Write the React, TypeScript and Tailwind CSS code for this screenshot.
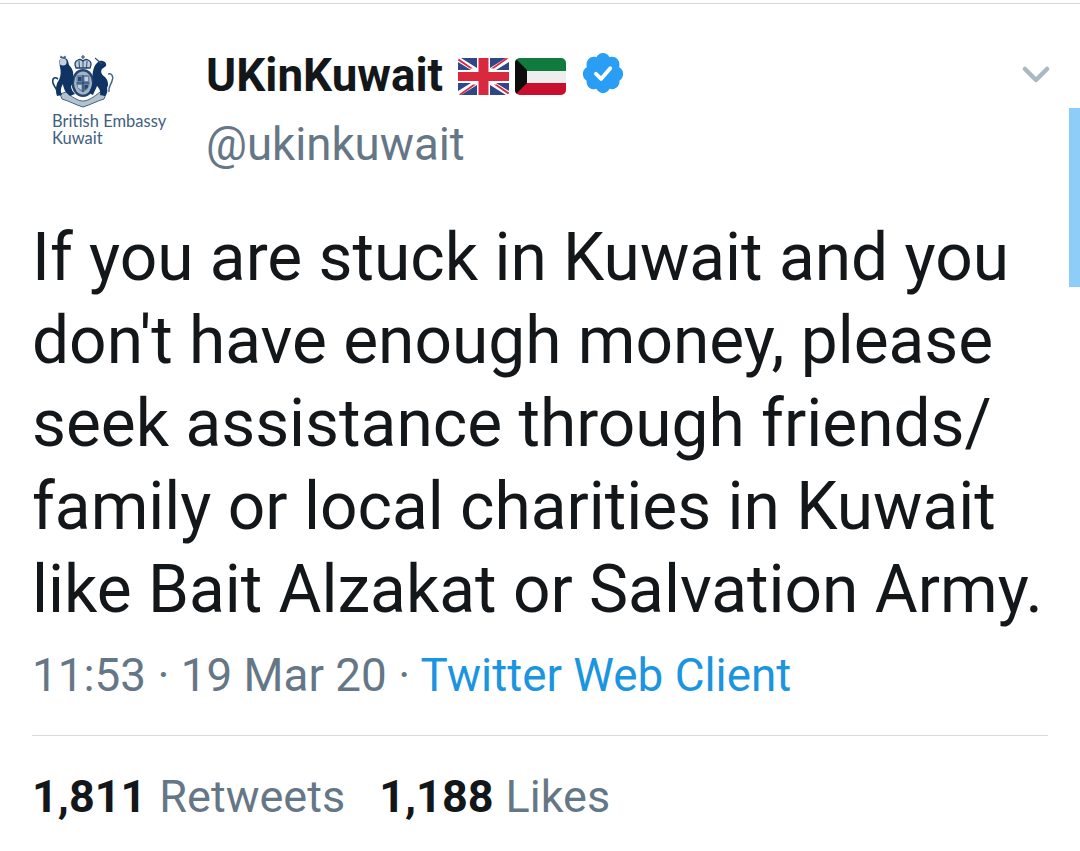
const font = { fontFamily: "Roboto, sans-serif" };

function Crest() {
  return (
    <svg width="64" height="54" viewBox="0 0 64 54" className="block">
      {/* motto ribbon */}
      <path d="M8 39 L14 37 C20 42 26 46 31 46 C36 46 42 42 48 37 L54 39 L52 44 C45 46 38 50 31 52 C24 50 17 46 10 44 Z" fill="#b4c1cf" stroke="#31527a" strokeWidth="0.9" />
      {/* crown */}
      <path d="M31 0 V4 M29 2 H33" stroke="#31527a" strokeWidth="1.2" />
      <path d="M24 13 C22 9 23 6 26 5 C28 4 30 5 31 6 C32 5 34 4 36 5 C39 6 40 9 38 13 Z" fill="#c2cdd9" stroke="#1c3f6b" strokeWidth="1.3" />
      <path d="M31 5 V13 M27 6 L27.5 13 M35 6 L34.5 13" stroke="#1c3f6b" strokeWidth="0.9" />
      {/* garter and shield */}
      <ellipse cx="31" cy="28" rx="11.5" ry="14" fill="#23466f" />
      <ellipse cx="31" cy="28" rx="9" ry="11.5" fill="#a4b4c6" />
      <path d="M24.5 20 H37.5 V29 C37.5 33 34 36 31 37.5 C28 36 24.5 33 24.5 29 Z" fill="#6c86a3" />
      <path d="M31 20 V37 M24.5 28 H37.5" stroke="#1f4470" strokeWidth="1.1" />
      <path d="M26 22 H29.5 V26 H26 Z M32.5 30 H36 V32.5 L32.5 35 Z" fill="#25496f" />
      <path d="M32.5 22 H36 V26 H32.5 Z M26 30 H29.5 V35 L26 32.5 Z" fill="#c6d0db" />
      {/* lion */}
      <path d="M7 6 C9 2 15 2 16 6 L17 10 C20 13 22 17 21 21 C22 24 21 29 19 31 C19 34 21 37 23 39 L18 41 L13 36 C12 33 11 31 11 29 C9 32 8 36 10 40 L5 41 C3 35 4 29 7 25 C9 21 9 16 8 12 Z" fill="#0f3463" />
      <ellipse cx="11" cy="7" rx="3.6" ry="3.6" fill="#c5d0dc" />
      <path d="M8 3 L8.5 0.5 L11 2 L13.5 0.5 L14 3 Z" fill="#456484" />
      <path d="M6 24 C2 21 0 24 1 28 C2 32 5 33 5 37" fill="none" stroke="#143a69" strokeWidth="1.6" />
      {/* unicorn */}
      <path d="M47 6 C52 5 55 8 54 11 L50 14 C48 17 50 20 53 22 C56 25 57 30 55 33 C56 36 55 39 53 41 L48 40 C49 36 47 33 45 31 C44 34 42 37 41 40 L37 38 C39 34 41 29 41 24 C40 19 41 13 44 9 Z" fill="#0f3463" />
      <path d="M43 3 L50 9" stroke="#31527a" strokeWidth="1.2" />
      <path d="M56 19 C60 18 62 22 60 26 C59 30 56 32 57 37" fill="none" stroke="#47658a" strokeWidth="1.5" />
    </svg>
  );
}

function UkFlag() {
  return (
    <svg width="51" height="37" viewBox="0 0 51 37" className="block">
      <defs>
        <clipPath id="ukc"><rect width="51" height="37" rx="3" /></clipPath>
      </defs>
      <g clipPath="url(#ukc)">
        <rect width="51" height="37" fill="#fff" />
        <path d="M3 0 L19 0 L19 10 Z M32 0 L48 0 L32 10 Z M0 4 L13 12 L0 12 Z M51 4 L38 12 L51 12 Z M0 25 L13 25 L0 33 Z M51 25 L38 25 L51 33 Z M19 27 L19 37 L3 37 Z M32 27 L48 37 L32 37 Z" fill="#2f4687" />
        <path d="M0 0 L15 10.5 L12 10.5 L0 2.5 Z M51 0 L36 10.5 L33 10.5 L48 0 Z M0 37 L15 26.5 L18 26.5 L3 37 Z M51 37 L36 26.5 L39 26.5 L51 34.5 Z" fill="#d8293f" />
        <rect x="20.5" width="10" height="37" fill="#d8293f" />
        <rect y="14" width="51" height="9" fill="#d8293f" />
      </g>
    </svg>
  );
}

function KwFlag() {
  return (
    <svg width="51" height="37" viewBox="0 0 51 37" className="block">
      <defs>
        <clipPath id="kwc"><rect width="51" height="37" rx="5" /></clipPath>
      </defs>
      <g clipPath="url(#kwc)">
        <rect width="51" height="13" fill="#117a3e" />
        <rect y="13" width="51" height="12" fill="#eeeeee" />
        <rect y="25" width="51" height="12" fill="#c8102e" />
        <path d="M0 0 L12 12 V25 L0 37 Z" fill="#0c0c0c" />
      </g>
    </svg>
  );
}

function Verified() {
  return (
    <svg width="46" height="46" viewBox="0 0 24 24" className="block">
      <path
        fill="#2a9df4"
        d="M22.5 12.5c0-1.58-.875-2.95-2.148-3.6.154-.435.238-.905.238-1.4 0-2.21-1.71-3.998-3.818-3.998-.47 0-.92.084-1.336.25C14.818 2.415 13.51 1.5 12 1.5s-2.816.917-3.437 2.25c-.415-.165-.866-.25-1.336-.25-2.11 0-3.818 1.79-3.818 4 0 .494.083.964.237 1.4-1.272.65-2.147 2.018-2.147 3.6 0 1.495.782 2.798 1.942 3.486-.02.17-.032.34-.032.514 0 2.21 1.708 4 3.818 4 .47 0 .92-.086 1.335-.25.62 1.334 1.926 2.25 3.437 2.25 1.512 0 2.818-.916 3.437-2.25.415.163.865.248 1.336.248 2.11 0 3.818-1.79 3.818-4 0-.174-.012-.344-.033-.513 1.158-.687 1.943-1.99 1.943-3.484z"
      />
      <path fill="none" stroke="#fff" strokeWidth="2" strokeLinecap="round" strokeLinejoin="round" d="M8.3 12.4l2.7 2.7 4.8-5.6" />
    </svg>
  );
}

export default function App() {
  return (
    <div className="relative w-[1080px] h-[851px] bg-white overflow-hidden" style={font}>
      <div className="h-[4px] border-t border-[#d9d9d9] mt-[3px]" />

      <div className="flex pl-[32px] pt-[39px]">
        <div className="w-[140px] h-[130px] flex flex-col pt-[9px] pl-[20px] shrink-0">
          <Crest />
          <div className="mt-[4px] text-[16.5px] leading-[17px] text-[#3f5f80] font-['Lato',sans-serif] whitespace-nowrap">
            <p>British Embassy</p>
            <p>Kuwait</p>
          </div>
        </div>
        <div className="pl-[34px]">
          <div className="flex items-center h-[60px]">
            <span className="text-[45.8px] font-bold leading-[60px] text-[#14171a]">UKinKuwait</span>
            <div className="flex items-center gap-[6px] ml-[15px]">
              <UkFlag />
              <KwFlag />
            </div>
            <div className="ml-[14px] -mt-[6px]"><Verified /></div>
          </div>
          <div className="text-[45.6px] leading-[60px] mt-[9px] text-[#657786]">@ukinkuwait</div>
        </div>
      </div>

      <svg width="28" height="18" viewBox="0 0 28 18" className="absolute left-[1022px] top-[66px]">
        <path d="M3 3 L14 14 L25 3" fill="none" stroke="#aab8c2" strokeWidth="4.5" strokeLinecap="round" strokeLinejoin="round" />
      </svg>
      <div className="absolute left-[1069px] top-[108px] w-[11px] h-[179px] bg-[#8ecdf7]" />

      <div className="pl-[32px] pt-[40px] text-[65.8px] leading-[83px] text-[#14171a] whitespace-nowrap">
        <p>If you are stuck in Kuwait and you</p>
        <p>don't have enough money, please</p>
        <p>seek assistance through friends/</p>
        <p>family or local charities in Kuwait</p>
        <p>like Bait Alzakat or Salvation Army.</p>
      </div>

      <div className="pl-[32px] mt-[15px] text-[45.8px] leading-[60px] text-[#657786] whitespace-nowrap">
        11:53 · 19 Mar 20 · <span className="text-[#1b95e0]">Twitter Web Client</span>
      </div>

      <div className="mx-[32px] mt-[29px] border-t border-[#d5dbe0]" />

      <div className="flex pl-[32px] pt-[31px] text-[45px] leading-[60px] text-[#657786] whitespace-nowrap">
        <span className="font-bold text-[#14171a]">1,811</span>
        <span className="ml-[13px]">Retweets</span>
        <span className="font-bold text-[#14171a] ml-[34px]">1,188</span>
        <span className="ml-[12px]">Likes</span>
      </div>
    </div>
  );
}
